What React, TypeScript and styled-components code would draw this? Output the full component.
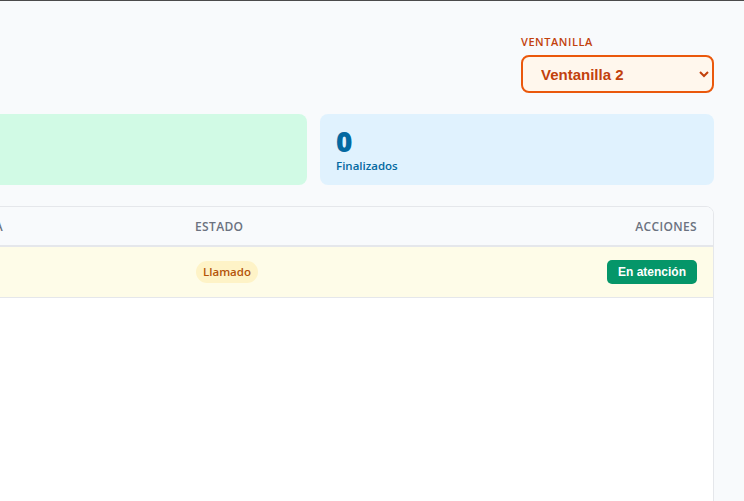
import React from 'react';
import styled, { createGlobalStyle } from 'styled-components';

const GlobalStyle = createGlobalStyle`
  html, body {
    margin: 0;
    padding: 0;
    background: #f8fafc;
    overflow: hidden;
  }
  body {
    font-family: "Open Sans", "Noto Sans", sans-serif;
    color: #1f2937;
  }
  * {
    box-sizing: border-box;
  }
`;

const Page = styled.div`
  min-height: 501px;
  border-top: 1px solid #4b4b4b;
  background: #f8fafc;
`;

// the page is wider than the window, only its right part is in view
const Main = styled.main`
  width: 1206px;
  margin-left: -492px;
  padding-top: 33px;
`;

const TopBar = styled.header`
  display: flex;
  justify-content: flex-end;
  margin-bottom: 21px;
`;

const Field = styled.label`
  display: flex;
  flex-direction: column;
  gap: 5px;
  width: 193px;
`;

const FieldLabel = styled.span`
  font-size: 11px;
  line-height: 16px;
  font-weight: 600;
  letter-spacing: 0.05em;
  text-transform: uppercase;
  color: #c2410c;
`;

const Select = styled.select`
  height: 38px;
  width: 100%;
  padding: 0 4px 0 14px;
  border: 2px solid #ea580c;
  border-radius: 8px;
  background: #fff7ed;
  color: #c2410c;
  font-family: "Liberation Sans", Arial, sans-serif;
  font-size: 15px;
  font-weight: 700;
  outline: none;
`;

const Stats = styled.section`
  display: grid;
  grid-template-columns: 1fr 1fr 394px;
  gap: 13px;
  margin-bottom: 21px;
`;

const tones = {
  amber: { bg: '#fef3c7', fg: '#b45309' },
  green: { bg: '#d1fae5', fg: '#047857' },
  blue: { bg: '#e0f2fe', fg: '#0369a1' },
};

type Tone = keyof typeof tones;

const StatCard = styled.div<{ $tone: Tone }>`
  height: 71px;
  padding: 10px 16px;
  border-radius: 8px;
  background: ${(p) => tones[p.$tone].bg};
  color: ${(p) => tones[p.$tone].fg};
`;

const StatValue = styled.div`
  font-size: 28px;
  line-height: 34px;
  font-weight: 800;
`;

const StatLabel = styled.div`
  font-size: 11.5px;
  line-height: 16px;
  font-weight: 600;
`;

const Table = styled.div`
  background: #ffffff;
  border: 1px solid #e5e7eb;
  border-radius: 8px;
  min-height: 320px;
  overflow: hidden;
`;

const Row = styled.div<{ $head?: boolean; $active?: boolean }>`
  display: grid;
  grid-template-columns: 160px 242px 268px 1fr 160px;
  align-items: center;
  height: ${(p) => (p.$head ? '40px' : '51px')};
  background: ${(p) => (p.$head ? '#f8fafc' : p.$active ? '#fefce8' : '#ffffff')};
  border-bottom: ${(p) => (p.$head ? '2px' : '1px')} solid #e5e7eb;
`;

const HeadCell = styled.div<{ $right?: boolean }>`
  padding: 0 16px;
  font-size: 12px;
  font-weight: 600;
  letter-spacing: 0.03em;
  text-transform: uppercase;
  color: #6b7280;
  text-align: ${(p) => (p.$right ? 'right' : 'left')};
`;

const Cell = styled.div<{ $right?: boolean }>`
  padding: 0 16px;
  font-size: 13px;
  color: #374151;
  text-align: ${(p) => (p.$right ? 'right' : 'left')};
`;

const Badge = styled.span`
  display: inline-block;
  margin-left: 1px;
  padding: 2px 7px;
  border-radius: 999px;
  background: #fef3c7;
  color: #b45309;
  font-size: 11.5px;
  line-height: 18px;
  font-weight: 600;
`;

const ActionButton = styled.button`
  padding: 5px 11px;
  border: none;
  border-radius: 5px;
  background: #059669;
  color: #ffffff;
  font-family: "Liberation Sans", Arial, sans-serif;
  font-size: 12px;
  line-height: 14px;
  font-weight: 700;
  cursor: pointer;
`;

const stats: { tone: Tone; value: number; label: string }[] = [
  { tone: 'amber', value: 3, label: 'En espera' },
  { tone: 'green', value: 1, label: 'En atención' },
  { tone: 'blue', value: 0, label: 'Finalizados' },
];

export default function App() {
  return (
    <Page>
      <GlobalStyle />
      <Main>
        <TopBar>
          <Field>
            <FieldLabel>Ventanilla</FieldLabel>
            <Select defaultValue="2">
              <option value="1">Ventanilla 1</option>
              <option value="2">Ventanilla 2</option>
              <option value="3">Ventanilla 3</option>
            </Select>
          </Field>
        </TopBar>

        <Stats>
          {stats.map((s) => (
            <StatCard key={s.label} $tone={s.tone}>
              <StatValue>{s.value}</StatValue>
              <StatLabel>{s.label}</StatLabel>
            </StatCard>
          ))}
        </Stats>

        <Table>
          <Row $head>
            <HeadCell>Ticket</HeadCell>
            <HeadCell>Paciente</HeadCell>
            <HeadCell>Ventanilla</HeadCell>
            <HeadCell>Estado</HeadCell>
            <HeadCell $right>Acciones</HeadCell>
          </Row>
          <Row $active>
            <Cell>A-012</Cell>
            <Cell>María López</Cell>
            <Cell>2</Cell>
            <Cell>
              <Badge>Llamado</Badge>
            </Cell>
            <Cell $right>
              <ActionButton>En atención</ActionButton>
            </Cell>
          </Row>
        </Table>
      </Main>
    </Page>
  );
}
